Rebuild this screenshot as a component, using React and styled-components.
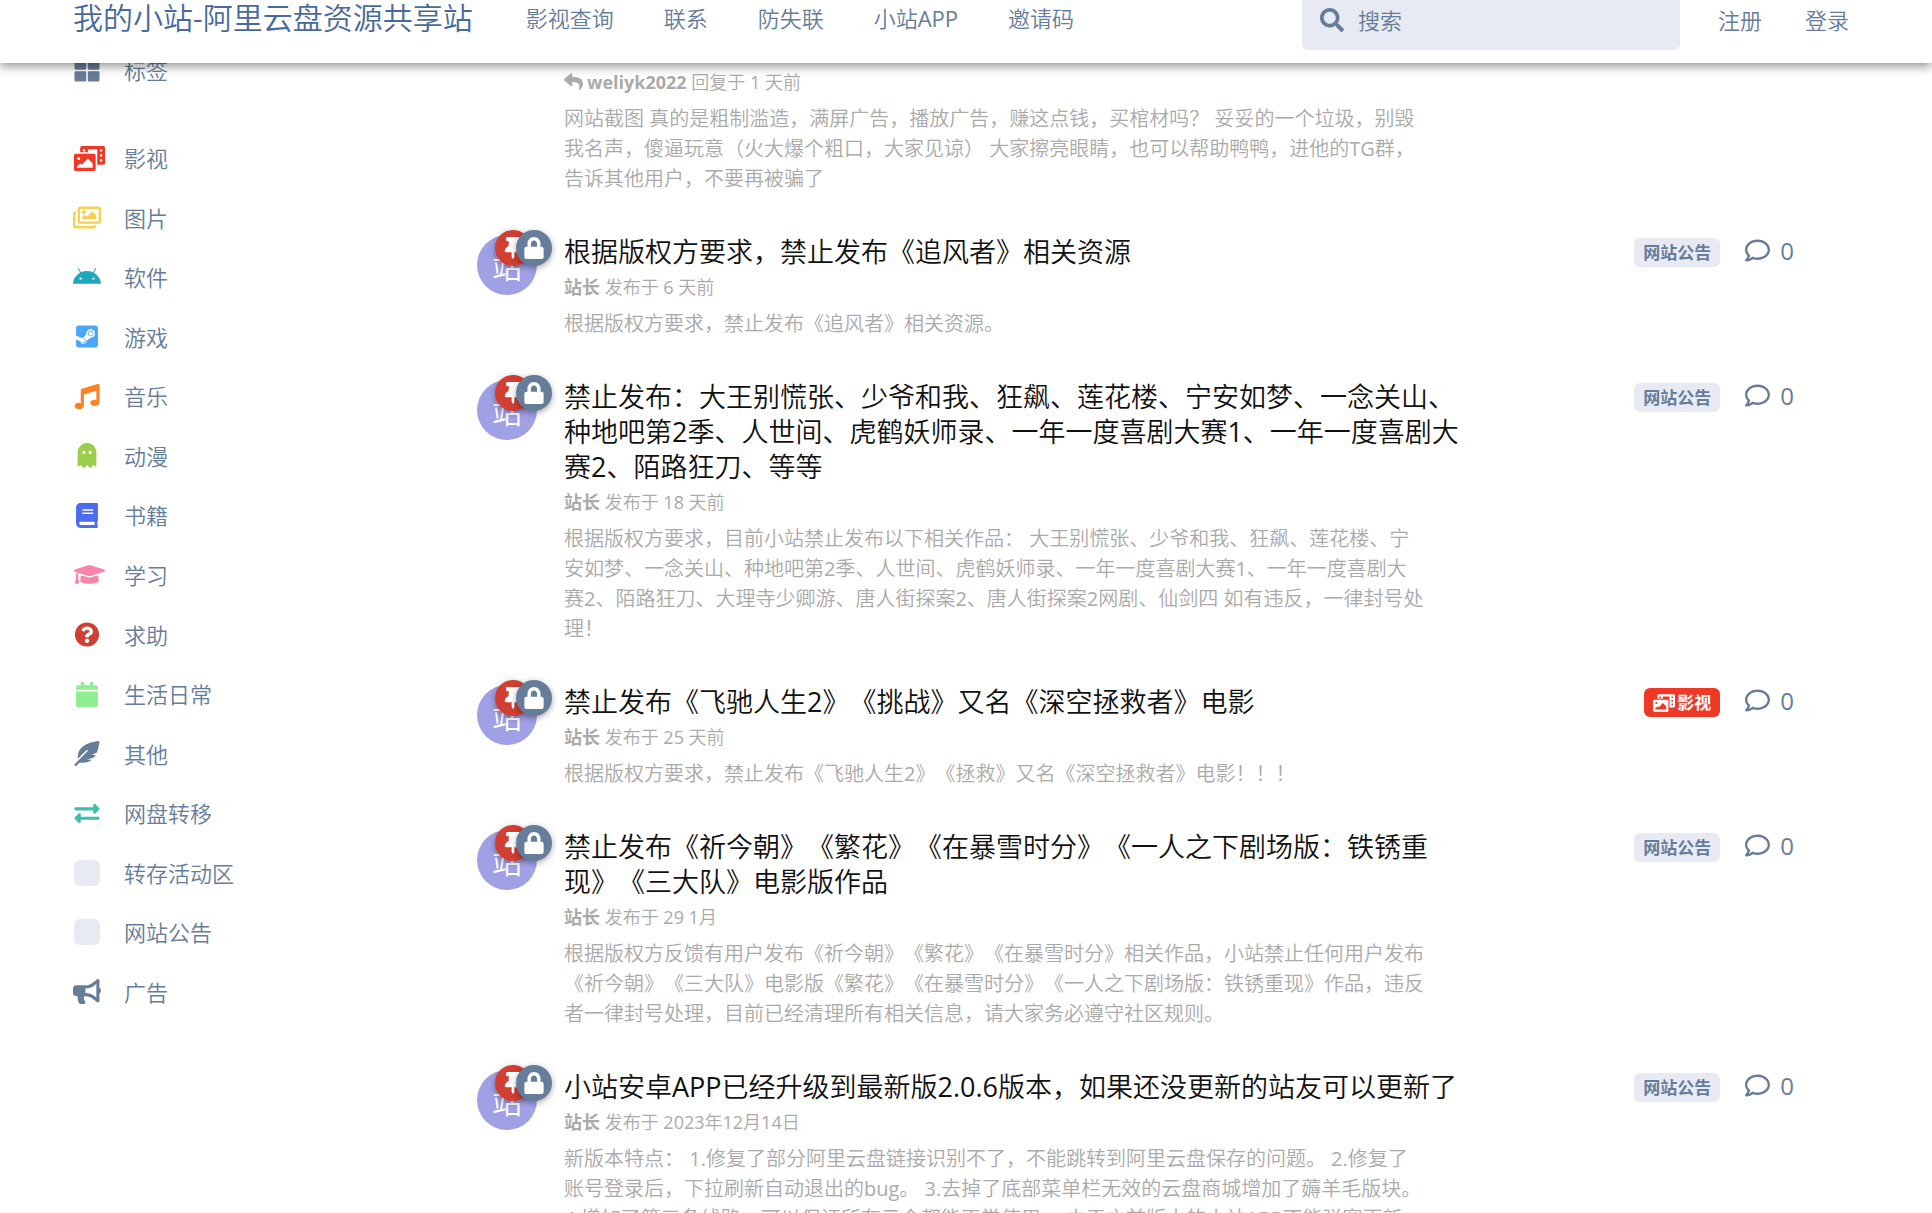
import React from 'react'
import styled, {createGlobalStyle} from 'styled-components'
import {
    FaAndroid, FaBook, FaBullhorn, FaCalendar, FaExchangeAlt, FaFeatherAlt, FaGhost, FaGraduationCap,
    FaLock, FaMusic, FaPhotoVideo, FaQuestionCircle, FaRegComment, FaRegImages, FaReply, FaSearch,
    FaSteamSquare, FaThLarge, FaThumbtack
} from 'react-icons/fa'

const navLinks = ['影视查询', '联系', '防失联', '小站APP', '邀请码'];

// wide: icons drawn on a 640 unit canvas instead of 512
const tags = [
    {name: '影视', icon: FaPhotoVideo, color: '#ef3826', wide: true},
    {name: '图片', icon: FaRegImages, color: '#f9d04f'},
    {name: '软件', icon: FaAndroid, color: '#1fa7bb'},
    {name: '游戏', icon: FaSteamSquare, color: '#4ba6f7'},
    {name: '音乐', icon: FaMusic, color: '#fb8122'},
    {name: '动漫', icon: FaGhost, color: '#9ccc4c'},
    {name: '书籍', icon: FaBook, color: '#4b6bf0'},
    {name: '学习', icon: FaGraduationCap, color: '#f785aa', wide: true},
    {name: '求助', icon: FaQuestionCircle, color: '#d13e32'},
    {name: '生活日常', icon: FaCalendar, color: '#8fee90'},
    {name: '其他', icon: FaFeatherAlt, color: '#667d99'},
    {name: '网盘转移', icon: FaExchangeAlt, color: '#3dbfb0'},
    {name: '转存活动区'},
    {name: '网站公告'},
    {name: '广告', icon: FaBullhorn, color: '#667d99'}
];

const posts = [
    {
        title: '根据版权方要求，禁止发布《追风者》相关资源',
        date: '6 天前',
        tag: '网站公告',
        excerpt: '根据版权方要求，禁止发布《追风者》相关资源。'
    },
    {
        title: '禁止发布：大王别慌张、少爷和我、狂飙、莲花楼、宁安如梦、一念关山、种地吧第2季、人世间、虎鹤妖师录、一年一度喜剧大赛1、一年一度喜剧大赛2、陌路狂刀、等等',
        date: '18 天前',
        tag: '网站公告',
        excerpt: '根据版权方要求，目前小站禁止发布以下相关作品： 大王别慌张、少爷和我、狂飙、莲花楼、宁安如梦、一念关山、种地吧第2季、人世间、虎鹤妖师录、一年一度喜剧大赛1、一年一度喜剧大赛2、陌路狂刀、大理寺少卿游、唐人街探案2、唐人街探案2网剧、仙剑四 如有违反，一律封号处理！'
    },
    {
        title: '禁止发布《飞驰人生2》《挑战》又名《深空拯救者》电影',
        date: '25 天前',
        tag: '影视',
        excerpt: '根据版权方要求，禁止发布《飞驰人生2》《拯救》又名《深空拯救者》电影！！！'
    },
    {
        title: '禁止发布《祈今朝》《繁花》《在暴雪时分》《一人之下剧场版：铁锈重现》《三大队》电影版作品',
        date: '29 1月',
        tag: '网站公告',
        excerpt: '根据版权方反馈有用户发布《祈今朝》《繁花》《在暴雪时分》相关作品，小站禁止任何用户发布《祈今朝》《三大队》电影版《繁花》《在暴雪时分》《一人之下剧场版：铁锈重现》作品，违反者一律封号处理，目前已经清理所有相关信息，请大家务必遵守社区规则。'
    },
    {
        title: '小站安卓APP已经升级到最新版2.0.6版本，如果还没更新的站友可以更新了',
        date: '2023年12月14日',
        tag: '网站公告',
        excerpt: '新版本特点： 1.修复了部分阿里云盘链接识别不了，不能跳转到阿里云盘保存的问题。 2.修复了账号登录后，下拉刷新自动退出的bug。 3.去掉了底部菜单栏无效的云盘商城增加了薅羊毛版块。 4.增加了第三条线路，可以保证所有云会都能正常使用。 由于之前版本的小站APP不能弹窗更新'
    }
];

const App = () => {
    return (
        <>
            <GlobalStyle/>
            <Header>
                <SiteTitle href="#">我的小站-阿里云盘资源共享站</SiteTitle>
                <Nav>
                    {navLinks.map(link => <NavLink key={link} href="#">{link}</NavLink>)}
                </Nav>
                <SearchBox>
                    <FaSearch aria-hidden="true"/>
                    <input type="search" placeholder="搜索" aria-label="搜索"/>
                </SearchBox>
                <Account>
                    <AccountButton type="button">注册</AccountButton>
                    <AccountButton type="button">登录</AccountButton>
                </Account>
            </Header>

            <Page>
                <Sidebar>
                    <TagLink href="#">
                        <TagIcon><FaThLarge/></TagIcon>
                        标签
                    </TagLink>
                    <TagList>
                        {tags.map(({name, icon: Icon, color, wide}) => (
                            <li key={name}>
                                <TagLink href="#">
                                    {Icon ? <TagIcon $color={color} $wide={wide}><Icon/></TagIcon> : <Swatch/>}
                                    {name}
                                </TagLink>
                            </li>
                        ))}
                    </TagList>
                </Sidebar>

                <Discussions>
                    <Post>
                        <PostBody>
                            <Meta><FaReply/><b>weliyk2022</b> 回复于 1 天前</Meta>
                            <Excerpt>
                                网站截图 真的是粗制滥造，满屏广告，播放广告，赚这点钱，买棺材吗？ 妥妥的一个垃圾，别毁我名声，傻逼玩意（火大爆个粗口，大家见谅） 大家擦亮眼睛，也可以帮助鸭鸭，进他的TG群，告诉其他用户，不要再被骗了
                            </Excerpt>
                        </PostBody>
                    </Post>
                    {posts.map(post => (
                        <Post key={post.title}>
                            <Avatar>
                                站
                                <Badges>
                                    <Badge $color="#d13e32"><FaThumbtack/></Badge>
                                    <Badge $color="#667d99"><FaLock/></Badge>
                                </Badges>
                            </Avatar>
                            <PostBody>
                                <PostTitle><a href="#">{post.title}</a></PostTitle>
                                <Meta><b>站长</b> 发布于 {post.date}</Meta>
                                <Excerpt>{post.excerpt}</Excerpt>
                            </PostBody>
                            <PostInfo>
                                {post.tag === '影视'
                                    ? <Label $filled><FaPhotoVideo/>{post.tag}</Label>
                                    : <Label>{post.tag}</Label>}
                                <Replies><FaRegComment/>0</Replies>
                            </PostInfo>
                        </Post>
                    ))}
                </Discussions>
            </Page>
        </>
    )
}

const boldFont = '"Open Sans", "Noto Sans CJK SC", sans-serif';

const GlobalStyle = createGlobalStyle`
    * {
        box-sizing: border-box;
    }
    html, body {
        height: 100%;
        overflow: hidden;
    }
    body {
        margin: 0;
        background: #fff;
        color: #667d99;
        font-family: "Open Sans", "Noto Sans CJK SC DemiLight", "Noto Sans CJK SC", sans-serif;
        font-size: 22px;
        text-spacing-trim: space-all;
    }
    a {
        color: inherit;
        text-decoration: none;
    }
    b {
        font-family: ${boldFont};
    }
`;

const Header = styled.header`
    position: relative;
    z-index: 1;
    display: flex;
    align-items: flex-start;
    height: 63px;
    padding: 0 83px 0 73px;
    background: #fff;
    box-shadow: 0 3px 10px rgba(0, 0, 0, .45);
    line-height: 36px;
    white-space: nowrap;
`;

const SiteTitle = styled.a`
    margin-right: 53px;
    color: #48699b;
    font-size: 30px;
`;

const Nav = styled.nav`
    display: flex;
    flex: 1;
    gap: 50px;
`;

const NavLink = styled.a`
    color: #667d99;
`;

const SearchBox = styled.div`
    display: flex;
    gap: 14px;
    width: 378px;
    height: 50px;
    padding: 0 18px;
    border-radius: 0 0 6px 6px;
    background: #e7eaf3;

    svg {
        flex: none;
        width: 24px;
        height: 40px;
    }
    input {
        flex: 1;
        min-width: 0;
        height: 40px;
        padding: 0;
        border: 0;
        outline: 0;
        background: none;
        color: #667d99;
        font: inherit;
    }
    input::placeholder {
        color: #667d99;
        opacity: 1;
    }
`;

const Account = styled.div`
    display: flex;
    gap: 43px;
    margin-left: 38px;
`;

const AccountButton = styled.button`
    height: 40px;
    padding: 0;
    border: 0;
    background: none;
    color: #667d99;
    font: inherit;
`;

const Page = styled.div`
    display: grid;
    grid-template-columns: 403px 1fr;
    padding: 0 138px 0 74px;
`;

// the first link is scrolled halfway under the header
const Sidebar = styled.aside`
    margin-top: -11px;
`;

const TagList = styled.ul`
    display: flex;
    flex-direction: column;
    justify-content: space-between;
    min-height: 870px;
    margin: 52px 0 0;
    padding: 0;
    list-style: none;
`;

const TagLink = styled.a`
    display: flex;
    align-items: center;
    gap: 24px;
    line-height: 36px;
`;

const TagIcon = styled.span`
    display: flex;
    justify-content: ${props => props.$wide ? 'flex-start' : 'center'};
    width: 26px;
    color: ${props => props.$color || '#667d99'};

    svg {
        flex: none;
        width: ${props => props.$wide ? 31 : 28}px;
        height: 25px;
    }
`;

const Swatch = styled.span`
    width: 26px;
    height: 26px;
    border-radius: 6px;
    background: #e7eaf3;
`;

const Discussions = styled.main`
    display: flex;
    flex-direction: column;
    gap: 40px;
    padding-top: 6px;
`;

const Post = styled.article`
    display: grid;
    grid-template-columns: 60px 1fr auto;
    column-gap: 27px;
`;

const PostBody = styled.div`
    grid-column: 2;
    max-width: 900px;
`;

const Avatar = styled.div`
    position: relative;
    width: 60px;
    height: 60px;
    margin-top: 1px;
    border-radius: 50%;
    background: #a0a0e5;
    color: #fff;
    font-size: 30px;
    line-height: 64px;
    text-align: center;
`;

const Badges = styled.div`
    position: absolute;
    top: -5px;
    right: -15px;
    display: flex;
`;

const Badge = styled.span`
    display: flex;
    align-items: center;
    justify-content: center;
    width: 36px;
    height: 36px;
    border-radius: 50%;
    background: ${props => props.$color};
    box-shadow: 0 2px 6px rgba(0, 0, 0, .35);
    font-size: 22px;

    & + & {
        margin-left: -15px;
    }
`;

const PostTitle = styled.h3`
    margin: 0 0 5px;
    color: #111;
    font-size: 27px;
    font-weight: 400;
    line-height: 35px;
`;

const Meta = styled.div`
    color: #aaa;
    font-size: 18px;
    line-height: 27px;

    svg {
        width: 19px;
        height: 19px;
        margin-right: 4px;
        vertical-align: -2px;
    }
`;

const Excerpt = styled.p`
    max-width: 862px;
    margin: 8px 0 0;
    color: #aaa;
    font-size: 20px;
    line-height: 30px;
`;

const PostInfo = styled.div`
    display: flex;
    align-items: flex-start;
    gap: 25px;
    padding-top: 4px;
`;

const Label = styled.span`
    display: flex;
    align-items: center;
    gap: 2px;
    padding: 0 9px;
    border-radius: 6px;
    background: ${props => props.$filled ? '#ef3826' : '#e7eaf3'};
    color: ${props => props.$filled ? '#fff' : '#667d99'};
    font-family: ${boldFont};
    font-size: 17px;
    font-weight: 700;
    line-height: 29px;

    svg {
        width: 22px;
        height: 18px;
    }
`;

const Replies = styled.span`
    display: flex;
    align-items: center;
    gap: 10px;
    font-size: 24px;
    line-height: 24px;

    svg {
        width: 25px;
        height: 25px;
    }
`;

export default App
